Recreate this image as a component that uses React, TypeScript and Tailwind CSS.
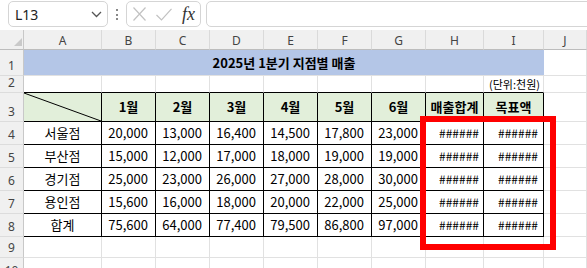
import type { ReactNode } from "react";

const FONT = { fontFamily: '"Noto Sans CJK KR", "Noto Sans", sans-serif' };
const UI_FONT = { fontFamily: '"Noto Sans", "Open Sans", sans-serif' };

const COLS = ["A", "B", "C", "D", "E", "F", "G", "H", "I", "J"];
const MONTHS = ["1월", "2월", "3월", "4월", "5월", "6월"];

const ROWS: { name: string; values: string[] }[] = [
  { name: "서울점", values: ["20,000", "13,000", "16,400", "14,500", "17,800", "23,000"] },
  { name: "부산점", values: ["15,000", "12,000", "17,000", "18,000", "19,000", "19,000"] },
  { name: "경기점", values: ["25,000", "23,000", "26,000", "27,000", "28,000", "30,000"] },
  { name: "용인점", values: ["15,600", "16,000", "18,000", "20,000", "22,000", "25,000"] },
  { name: "합계", values: ["75,600", "64,000", "77,400", "79,500", "86,800", "97,000"] },
];

const GRID = "border-r border-b border-[#e1e1e1]";
const BOX = "border-r border-b border-black";

function RowHead({ n }: { n: number }) {
  return (
    <div
      className="flex items-end justify-center pb-[3px] bg-[#f0f0f0] border-r border-r-[#c8c8c8] border-b border-b-[#dcdcdc] text-[12px] text-[#444] leading-none"
      style={UI_FONT}
    >
      {n}
    </div>
  );
}

function Cell({ className = "", children }: { className?: string; children?: ReactNode }) {
  return <div className={`flex items-center min-w-0 ${className}`}>{children}</div>;
}

function FormulaBar() {
  return (
    <div className="flex h-[30px] items-start gap-0 bg-white pl-2 overflow-hidden">
      <div
        className="mt-[1px] flex h-[26px] w-[100px] shrink-0 items-center justify-between rounded-[5px] border border-[#d5d5d5] pl-[6px] pr-[5px] text-[14px] text-[#222]"
        style={UI_FONT}
      >
        <span>L13</span>
        <svg width="11" height="7" viewBox="0 0 11 7">
          <path d="M1 1 L5.5 5.5 L10 1" fill="none" stroke="#555" strokeWidth="1.3" />
        </svg>
      </div>
      <div className="mx-[8px] mt-[9px] flex flex-col gap-[2.5px]">
        <span className="block h-[2px] w-[2px] bg-[#888]" />
        <span className="block h-[2px] w-[2px] bg-[#888]" />
        <span className="block h-[2px] w-[2px] bg-[#888]" />
      </div>
      <div className="mt-[1px] flex h-[26px] w-[75px] shrink-0 items-center rounded-[5px] border border-[#d5d5d5] pl-[6px]">
        <svg width="13" height="14" viewBox="0 0 13 14">
          <path d="M0.5 0.5 L12.5 13.5 M12.5 0.5 L0.5 13.5" stroke="#c2c2c2" strokeWidth="1.2" fill="none" />
        </svg>
        <svg className="ml-[10px]" width="16" height="13" viewBox="0 0 16 13">
          <path d="M0.5 7 L5.5 12 L15.5 0.8" stroke="#c2c2c2" strokeWidth="1.2" fill="none" />
        </svg>
        <span
          className="ml-[10px] text-[18px] italic leading-none text-[#333]"
          style={{ fontFamily: '"Liberation Serif", "DejaVu Serif", serif' }}
        >
          fx
        </span>
      </div>
      <div className="ml-[5px] mt-[1px] h-[26px] flex-1 -mr-3 rounded-[5px] border border-[#d5d5d5]" />
    </div>
  );
}

export default function App() {
  return (
    <div className="relative h-[268px] w-[587px] overflow-hidden bg-white" style={FONT}>
      <FormulaBar />
      <div className="grid grid-cols-[24px_78px_54px_54px_54px_54px_54px_54px_58px_60px_1fr] grid-rows-[20px_26px_17px_29px_23px_23px_23px_23px_23px_21px_23px] text-[13px] text-black">
        {/* column headers */}
        <div className="relative bg-[#f0f0f0] border-r border-r-[#c8c8c8] border-b border-b-[#bdbdbd]">
          <svg className="absolute left-[14px] top-[8px]" width="8" height="8" viewBox="0 0 8 8">
            <path d="M8 0 L8 8 L0 8 Z" fill="#c9c9c9" />
          </svg>
        </div>
        {COLS.map((c) => (
          <div
            key={c}
            className="flex items-center justify-center pt-[2px] bg-[#f0f0f0] border-r border-r-[#dadada] border-b border-b-[#bdbdbd] text-[12px] text-[#444] leading-none"
            style={UI_FONT}
          >
            {c}
          </div>
        ))}

        {/* row 1 */}
        <RowHead n={1} />
        <Cell className="col-span-9 justify-center bg-[#b4c6e7] border-b border-[#e1e1e1] font-bold">
          2025년 1분기 지점별 매출
        </Cell>
        <Cell className={GRID} />

        {/* row 2 */}
        <RowHead n={2} />
        {Array.from({ length: 8 }).map((_, i) => (
          <Cell key={i} className="border-r border-r-[#e1e1e1] border-b border-b-black" />
        ))}
        <Cell className="justify-end pr-[3px] border-r border-r-[#e1e1e1] border-b border-b-black text-[11px]">
          (단위:천원)
        </Cell>
        <Cell className={GRID} />

        {/* row 3 */}
        <RowHead n={3} />
        <div className={`relative bg-[#e2efda] ${BOX}`}>
          <svg className="absolute inset-0 h-full w-full" preserveAspectRatio="none" viewBox="0 0 100 100">
            <line x1="0" y1="0" x2="100" y2="100" stroke="black" strokeWidth="1" vectorEffect="non-scaling-stroke" />
          </svg>
        </div>
        {[...MONTHS, "매출합계", "목표액"].map((h) => (
          <Cell key={h} className={`justify-center bg-[#e2efda] font-bold ${BOX}`}>
            {h}
          </Cell>
        ))}
        <Cell className={GRID} />

        {/* data rows */}
        {ROWS.map((r, ri) => (
          <div key={r.name} className="contents">
            <RowHead n={ri + 4} />
            <Cell className={`justify-center ${BOX}`}>{r.name}</Cell>
            {r.values.map((v, vi) => (
              <Cell key={vi} className={`justify-end pr-[7px] ${BOX}`}>
                {v}
              </Cell>
            ))}
            <Cell className={`justify-end pr-[4px] text-[12px] ${BOX}`}>######</Cell>
            <Cell className={`justify-end pr-[5px] text-[12px] ${BOX}`}>######</Cell>
            <Cell className={GRID} />
          </div>
        ))}

        {/* rows 9-10 */}
        {[9, 10].map((n) => (
          <div key={n} className="contents">
            <RowHead n={n} />
            {COLS.map((c) => (
              <Cell key={c} className={GRID} />
            ))}
          </div>
        ))}
      </div>

      {/* highlight box */}
      <div className="pointer-events-none absolute left-[420px] top-[116px] h-[134px] w-[136px] border-[6px] border-[#ff0000]" />
    </div>
  );
}
